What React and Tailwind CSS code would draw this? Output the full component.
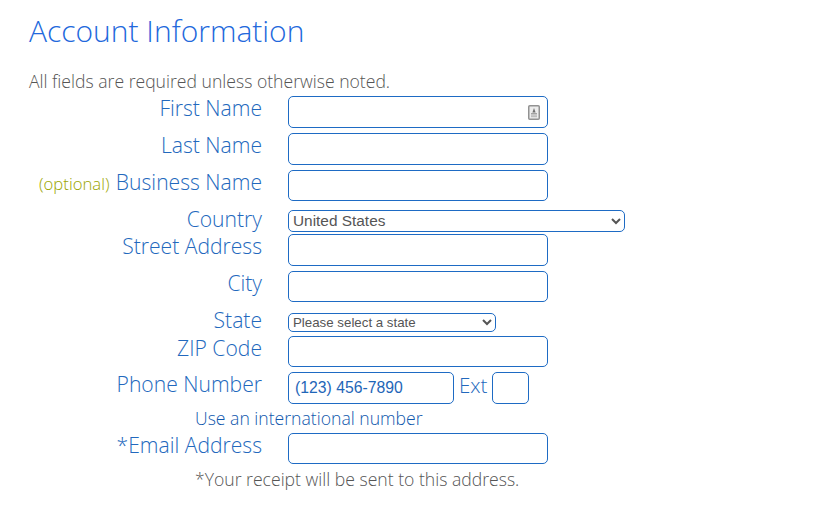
const LABEL = 'w-[262px] shrink-0 text-right text-[21.12px] leading-[24px] text-[#2268bd]'
const INPUT = 'block w-[260px] rounded-[5px] border border-[#1e6bc4] bg-white'

function Row({ label, optional, className = '', children }) {
  return (
    <div className={`flex items-start gap-[26px] ${className}`}>
      <label className={LABEL}>
        {optional && <span className="mr-[2px] text-[16.72px] text-[#9aa500]">(optional) </span>}
        {label}
      </label>
      {children}
    </div>
  )
}

export default function App() {
  return (
    <div className="h-[505px] w-[838px] overflow-hidden bg-white font-['Open_Sans',sans-serif] font-light">
      <h1 className="pl-[29px] pt-[11px] text-[30px] leading-[40px] text-[#2268dc]">Account Information</h1>
      <p className="mb-[4px] mt-[19px] pl-[29px] text-[17.6px] leading-[22px] text-[#555555]">
        All fields are required unless otherwise noted.
      </p>

      <Row label="First Name" className="h-[37px]">
        <div className="relative">
          <input className={`${INPUT} h-[32px]`} />
          {/* contact card autofill icon */}
          <svg className="absolute right-[8px] top-[9px] h-[15px] w-[12px]" viewBox="0 0 12 15" fill="none">
            <rect x="0.75" y="0.75" width="10.5" height="13.5" rx="1" fill="#ececec" stroke="#929292" strokeWidth="1.5" />
            <path d="M6 3 7.6 7.4H4.4z" fill="#6f6f6f" />
            <rect x="3" y="8.2" width="6" height="1.2" fill="#8f8f8f" />
            <rect x="3" y="10.2" width="6" height="2" fill="#bdbdbd" />
          </svg>
        </div>
      </Row>
      <Row label="Last Name" className="h-[37px]">
        <input className={`${INPUT} h-[32px]`} />
      </Row>
      <Row label="Business Name" optional className="h-[37px]">
        <input className={`${INPUT} h-[31px]`} />
      </Row>
      <Row label="Country" className="h-[27px]">
        <select className="mt-[3px] h-[22px] w-[337px] rounded-[5px] border border-[#1e6bc4] bg-white pb-[2px] font-['Liberation_Sans',sans-serif] text-[15.4px] font-normal text-[#555555]">
          <option>United States</option>
        </select>
      </Row>
      <Row label="Street Address" className="h-[37px]">
        <input className={`${INPUT} h-[32px]`} />
      </Row>
      <Row label="City" className="h-[37px]">
        <input className={`${INPUT} h-[31px]`} />
      </Row>
      <Row label="State" className="h-[28px]">
        <select className="mt-[5px] h-[19px] w-[208px] rounded-[5px] border border-[#1e6bc4] bg-white font-['Liberation_Sans',sans-serif] text-[13.3px] font-normal text-[#555555]">
          <option>Please select a state</option>
        </select>
      </Row>
      <Row label="ZIP Code" className="h-[36px]">
        <input className={`${INPUT} h-[31px]`} />
      </Row>
      <Row label="Phone Number" className="h-[36px]">
        <div className="flex items-start">
          <input
            className="block h-[32px] w-[166px] rounded-[5px] border border-[#1e6bc4] bg-white px-[6px] font-['Liberation_Sans',sans-serif] text-[15.75px] font-normal text-[#1f66b8]"
            defaultValue="(123) 456-7890"
          />
          <span className="ml-[5px] text-[20.6px] leading-[26px] text-[#2268bd]">Ext</span>
          <input className="ml-[4px] block h-[32px] w-[37px] rounded-[5px] border border-[#1e6bc4] bg-white" />
        </div>
      </Row>
      <a className="block h-[25px] pl-[195px] text-[17.6px] leading-[21px] text-[#0f57ad]">
        Use an international number
      </a>
      <Row label="*Email Address" className="h-[36px]">
        <input className={`${INPUT} h-[31px]`} />
      </Row>
      <p className="pl-[195px] text-[17.6px] leading-[20px] text-[#555555]">
        *Your receipt will be sent to this address.
      </p>
    </div>
  )
}
